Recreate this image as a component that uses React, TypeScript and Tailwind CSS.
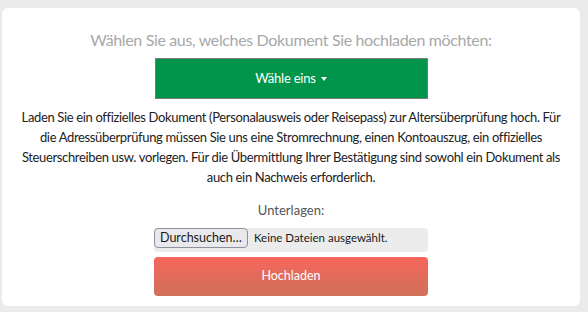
import React from "react";

export default function App() {
  return (
    <div
      className="min-h-screen bg-[#ebebeb] pt-2 pl-[2px] pb-[6px]"
      style={{ fontFamily: "Lato, 'Liberation Sans', sans-serif" }}
    >
      <div className="w-[578px] h-[298px] bg-white rounded-[6px] flex flex-col items-center px-[15px]">
        <div className="mt-[22px] text-[16px] leading-[20px] tracking-[-0.35px] text-[#a8a8a8]">
          Wählen Sie aus, welches Dokument Sie hochladen möchten:
        </div>
        <button className="mt-[8px] w-[273px] h-[41px] bg-[#00954a] border border-[#7a7a7a] text-white text-[13px] tracking-[-0.2px] flex items-center justify-center">
          Wähle eins
          <span className="ml-[5px] inline-block w-0 h-0 border-l-[3.5px] border-r-[3.5px] border-t-[4px] border-l-transparent border-r-transparent border-t-white" />
        </button>
        <p className="mt-[8px] text-[13px] leading-[20px] tracking-[-0.35px] text-[#222] text-center">
          Laden Sie ein offizielles Dokument (Personalausweis oder Reisepass) zur Altersüberprüfung hoch. Für die Adressüberprüfung müssen Sie uns eine Stromrechnung, einen Kontoauszug, ein offizielles Steuerschreiben usw. vorlegen. Für die Übermittlung Ihrer Bestätigung sind sowohl ein Dokument als auch ein Nachweis erforderlich.
        </p>
        <div className="mt-[13px] text-[13px] leading-[20px] text-[#555]">Unterlagen:</div>
        <div className="mt-[8px] w-[274px] h-[24px] bg-[#ececec] rounded-[4px] flex items-start">
          <div className="h-[20px] px-[5px] border border-[#8f8f9d] bg-[#e9e9ed] rounded-[4px] text-[12.5px] leading-[18px] text-[#1a1a1a]">
            Durchsuchen…
          </div>
          <span className="ml-[6px] text-[11.5px] leading-[20px] text-[#1a1a1a]">
            Keine Dateien ausgewählt.
          </span>
        </div>
        <button className="mt-[5px] w-[274px] h-[39px] rounded-[4px] bg-gradient-to-b from-[#f6655b] to-[#cf705a] text-white text-[12.5px]">
          Hochladen
        </button>
      </div>
    </div>
  );
}
